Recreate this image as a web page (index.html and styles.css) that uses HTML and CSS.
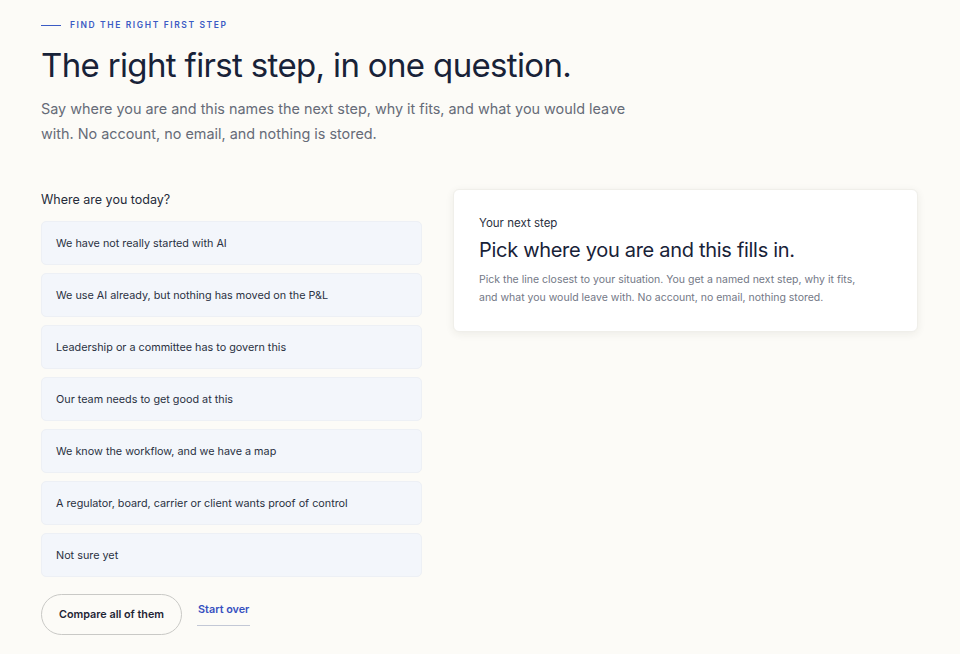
FILE: index.html
```html
<!DOCTYPE html>
<html lang="en">
<head>
<meta charset="utf-8">
<title>Find the right first step</title>
<link rel="stylesheet" href="styles.css">
</head>
<body>
<main class="page">
  <header class="intro">
    <p class="eyebrow"><span class="eyebrow-line"></span>FIND THE RIGHT FIRST STEP</p>
    <h1 class="title">The right first step, in one question.</h1>
    <p class="lede">Say where you are and this names the next step, why it fits, and what you would leave with. No account, no email, and nothing is stored.</p>
  </header>
  <section class="tool">
    <div class="chooser">
      <p class="question">Where are you today?</p>
      <ul class="options">
        <li class="option">We have not really started with AI</li>
        <li class="option">We use AI already, but nothing has moved on the P&amp;L</li>
        <li class="option">Leadership or a committee has to govern this</li>
        <li class="option">Our team needs to get good at this</li>
        <li class="option">We know the workflow, and we have a map</li>
        <li class="option">A regulator, board, carrier or client wants proof of control</li>
        <li class="option">Not sure yet</li>
      </ul>
      <div class="actions">
        <button class="btn-compare" type="button">Compare all of them</button>
        <a class="link-reset" href="#">Start over</a>
      </div>
    </div>
    <aside class="result">
      <p class="result-label">Your next step</p>
      <h2 class="result-title">Pick where you are and this fills in.</h2>
      <p class="result-body">Pick the line closest to your situation. You get a named next step, why it fits, and what you would leave with. No account, no email, nothing stored.</p>
    </aside>
  </section>
</main>
</body>
</html>
```
FILE: styles.css
```css
* { box-sizing: border-box; }
html, body { margin: 0; padding: 0; }
body {
  background: #fcfbf7;
  font-family: Inter, "Noto Sans", "Liberation Sans", sans-serif;
  color: #1b2236;
}
.page {
  padding: 19px 42px 20px 41px;
}
.intro { max-width: 600px; }
.eyebrow {
  margin: 0;
  display: flex;
  align-items: center;
  gap: 9px;
  font-size: 8.5px;
  font-weight: 600;
  letter-spacing: 1.6px;
  color: #3b5bc4;
  line-height: 12px;
}
.eyebrow-line {
  display: inline-block;
  width: 20px;
  height: 1px;
  background: #3b5bc4;
}
.title {
  margin: 14px 0 0;
  font-size: 33px;
  font-weight: 400;
  letter-spacing: -0.65px;
  line-height: 40px;
  color: #182238;
}
.lede {
  margin: 11px 0 0;
  font-size: 14.4px;
  line-height: 25px;
  color: #666b78;
  max-width: 600px;
}
.tool {
  margin-top: 46px;
  display: flex;
  align-items: flex-start;
  gap: 31px;
}
.chooser { width: 381px; flex: none; }
.question {
  margin: 0 0 13px;
  font-size: 12.5px;
  line-height: 16px;
  color: #252b3a;
}
.options {
  list-style: none;
  margin: 0;
  padding: 0;
  display: flex;
  flex-direction: column;
  gap: 8px;
}
.option {
  height: 44px;
  display: flex;
  align-items: center;
  padding: 0 14px;
  background: #f3f6fb;
  border: 1px solid #edf0f5;
  border-radius: 5px;
  font-size: 10.8px;
  color: #2a3142;
}
.actions {
  margin-top: 17px;
  display: flex;
  align-items: flex-start;
  gap: 15px;
}
.btn-compare {
  height: 41px;
  padding: 0 17px;
  border: 1px solid #c9c9c6;
  border-radius: 21px;
  background: #fcfbf7;
  font-family: inherit;
  font-size: 10.8px;
  font-weight: 600;
  color: #1f2535;
}
.link-reset {
  margin-top: 9px;
  padding: 0 1px 9px;
  font-size: 10.8px;
  font-weight: 600;
  color: #3650c0;
  text-decoration: none;
  border-bottom: 1px solid #c3c8d6;
}
.result {
  margin-top: -3px;
  width: 465px;
  flex: none;
  background: #ffffff;
  border: 1px solid #f0efea;
  border-radius: 6px;
  box-shadow: 0 2px 8px rgba(40, 40, 30, 0.07);
  padding: 26px 25px 24px;
}
.result-label {
  margin: 0;
  font-size: 11.5px;
  line-height: 14px;
  color: #2a3040;
}
.result-title {
  margin: 7px 0 0;
  font-size: 20px;
  font-weight: 400;
  letter-spacing: -0.3px;
  line-height: 26px;
  color: #182238;
}
.result-body {
  margin: 8px 0 0;
  font-size: 10.5px;
  line-height: 18px;
  color: #737886;
  padding-right: 20px;
}
```
